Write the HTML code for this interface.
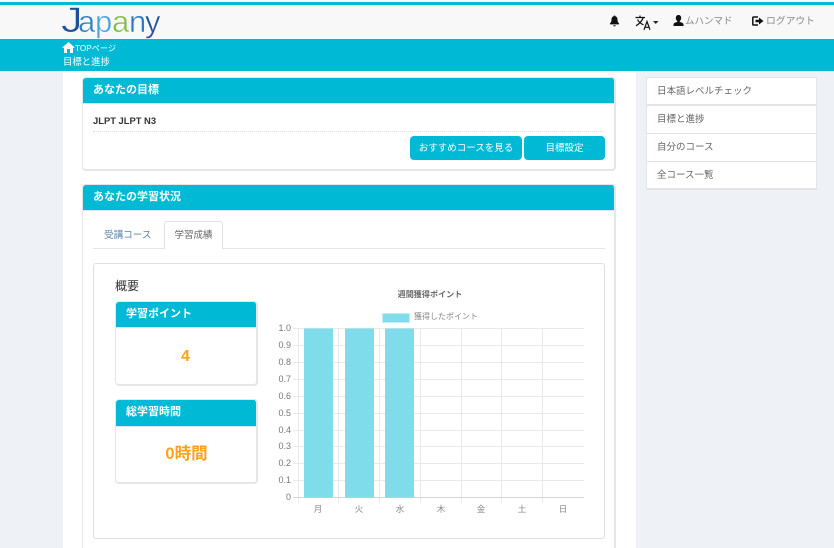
<!DOCTYPE html>
<html lang="ja"><head><meta charset="utf-8"><title>目標と進捗</title>
<style>
*{box-sizing:border-box}
html,body{margin:0;padding:0;width:834px;height:548px;overflow:hidden}
#w{position:relative;width:834px;height:548px;overflow:hidden;background:#eef1f6;font-family:"Liberation Sans","Noto Sans CJK JP",sans-serif;font-size:10px;color:#555}
.a{position:absolute;white-space:nowrap}
.panel{position:absolute;background:#fff;border:1px solid #e6e6e6;border-width:1px 2px 2px 1px;border-radius:4px;overflow:hidden}
.head{position:absolute;left:0;right:0;top:0;background:#00bad5;color:#fff;font-weight:bold;font-size:11px;border-bottom:1px solid #d5e8ec}
.btn{position:absolute;background:#00bad5;color:#fff;border-radius:4px;text-align:center;font-size:9.500px;height:24px;line-height:26px}
.li{position:absolute;left:646px;width:171px;background:#fff;border:1px solid #e2e4e7;height:29px;line-height:27px;padding-left:10px;color:#666;font-size:9.500px}
.tick{font-size:9px;color:#777;text-align:right;width:24px;left:267px;line-height:10px}
.xl{font-size:8.500px;color:#888;width:20px;text-align:center;top:504px;line-height:11px}
</style></head>
<body><div id="w">
<div class="a" style="left:63px;top:71px;width:573px;height:477px;background:#fff"></div>
<div class="a" style="left:0;top:0;width:834px;height:39px;background:#f8f8f8"></div>
<div class="a" style="left:0;top:2px;width:834px;height:3px;background:#00bad5"></div>

<svg class="a" style="left:0;top:0" width="180" height="39" viewBox="0 0 180 39">
<g font-family="'Liberation Sans',sans-serif" stroke="#f8f8f8" stroke-width=".5">
<text transform="translate(61 32) scale(1.35 1.1)" font-size="32" fill="#1e4f9a">J</text>
<text y="32" font-size="31" fill="#2f7fc4"><tspan x="78">a</tspan><tspan x="95" fill="#45a6dc">p</tspan><tspan x="112" fill="#7fbe45">a</tspan><tspan x="129" fill="#2c78bd">n</tspan><tspan x="145" fill="#1e559f">y</tspan></text>
</g>
</svg>
<div class="a" style="left:0;top:39px;width:834px;height:32px;background:#00bad5"></div>

<svg class="a" style="left:62px;top:42px" width="13" height="11" viewBox="0 0 13 11"><path fill="#fff" d="M6.500 0 L13 5.800 L11 5.800 L11 11 L8 11 L8 7 L5 7 L5 11 L2 11 L2 5.800 L0 5.800 Z"/></svg>
<div class="a" style="left:75px;top:42px;color:#fff;font-size:8.200px;line-height:13px">TOPページ</div>
<div class="a" style="left:63px;top:55px;color:#fff;font-size:9.400px;line-height:13px">目標と進捗</div>

<svg class="a" style="left:609px;top:15px" width="11" height="12" viewBox="0 0 11 12"><path fill="#111" d="M5.500 0.500c.6 0 1 .4 1 .9 1.500.4 2 1.600 2 3.100 0 2 .6 3 1.600 4v.9H.9v-.9c1-1 1.600-2 1.600-4 0-1.500.5-2.700 2-3.100 0-.5.4-.9 1-.9zM4.300 10.200h2.400c0 .7-.5 1.200-1.200 1.200s-1.200-.5-1.200-1.200z"/></svg>
<svg class="a" style="left:635px;top:15px" width="24" height="15" viewBox="0 0 24 15"><path fill="none" stroke="#111" stroke-width="1.200" d="M0.500 2.500H10M5 0.500V2.500M8.300 2.500C7 6 4 9 1 10.800M2.500 4.500C4 7.500 6 8.800 8.500 9.800"/><path fill="none" stroke="#111" stroke-width="1.200" d="M9 14.800L12 6.500L15 14.800M10.100 12.300H13.900"/><path fill="#222" d="M18 6h5.500l-2.750 3z"/></svg>
<svg class="a" style="left:673px;top:15px" width="11" height="11" viewBox="0 0 11 11"><path fill="#111" d="M5.500 0C7.300 0 8.200 1.300 8.200 3c0 1.400-.7 2.700-1.500 3.200v.7c1.800.5 3.800 1.200 3.800 2.400V11H.5V9.300c0-1.200 2-1.900 3.800-2.400v-.7C3.500 5.700 2.800 4.400 2.800 3 2.800 1.300 3.700 0 5.500 0z"/></svg>
<div class="a" style="left:685px;top:15px;font-size:9.500px;line-height:14px;color:#888">ムハンマド</div>
<svg class="a" style="left:752px;top:16px" width="12" height="10" viewBox="0 0 12 10"><path fill="none" stroke="#111" stroke-width="1.500" d="M6 1H1.500Q.8 1 .8 1.800V8.200Q.8 9 1.500 9H6"/><path fill="#111" d="M3.500 3.700H7V1.500L11.500 5 7 8.500V6.300H3.500z"/></svg>
<div class="a" style="left:766px;top:15px;font-size:9.800px;line-height:14px;color:#888">ログアウト</div>

<div class="panel" style="left:82px;top:77px;width:534px;height:94px">
  <div class="head" style="height:26px;line-height:24px;padding-left:10px">あなたの目標</div>
  <div class="a" style="left:10px;top:36px;font-size:9.400px;font-weight:bold;color:#333;line-height:13px">JLPT JLPT N3</div>
  <div class="a" style="left:10px;top:53px;width:510px;border-top:1px dotted #ddd"></div>
  <div class="btn" style="left:327px;top:58px;width:112px">おすすめコースを見る</div>
  <div class="btn" style="left:441px;top:58px;width:81px">目標設定</div>
</div>

<div class="panel" style="left:82px;top:184px;width:534px;height:380px;">
  <div class="head" style="height:26px;line-height:24px;padding-left:10px">あなたの学習状況</div>
</div>
<div class="a" style="left:93px;top:248px;width:512px;height:1px;background:#e5e5e5"></div>
<div class="a" style="left:104px;top:229px;font-size:9.600px;line-height:14px;color:#5b84ad">受講コース</div>
<div class="a" style="left:164px;top:221px;width:59px;height:28px;background:#fff;border:1px solid #e2e2e2;border-bottom:0;border-radius:3px 3px 0 0;text-align:center;line-height:27px;font-size:9.500px;color:#666">学習成績</div>

<div class="a" style="left:93px;top:263px;width:512px;height:276px;border:1px solid #e0e0e0;border-radius:3px;background:#fff"></div>
<div class="a" style="left:115px;top:278px;font-size:12px;line-height:16px;color:#333">概要</div>

<div class="panel" style="left:115px;top:301px;width:143px;height:85px">
  <div class="head" style="height:26px;line-height:24px;padding-left:10px">学習ポイント</div>
  <div class="a" style="left:-1px;width:141px;top:45px;text-align:center;color:#ffa21a;font-weight:bold;font-size:16px;line-height:20px">4</div>
</div>
<div class="panel" style="left:115px;top:399px;width:143px;height:85px">
  <div class="head" style="height:27px;line-height:25px;padding-left:10px">総学習時間</div>
  <div class="a" style="left:0;width:141px;top:43px;text-align:center;color:#ffa21a;font-weight:bold;font-size:16.500px;line-height:22px">0時間</div>
</div>

<div class="a" style="left:330px;width:200px;top:289px;text-align:center;font-size:8.100px;font-weight:bold;color:#666;line-height:12px">週間獲得ポイント</div>
<div class="a" style="left:382px;top:313px;width:28px;height:10px;background:#7fdcea;border:1px solid #bfeef5"></div>
<div class="a" style="left:414px;top:311px;font-size:8px;color:#888;line-height:12px">獲得したポイント</div>

<svg class="a" style="left:280px;top:320px" width="310" height="190" viewBox="280 320 310 190" shape-rendering="crispEdges">
<g stroke="#e9e9e9" stroke-width="1">
<path d="M293 328.500H584M293 345.500H584M293 362.500H584M293 379.500H584M293 396.500H584M293 413.500H584M293 430.500H584M293 446.500H584M293 463.500H584M293 480.500H584"/>
<path d="M298.500 328V503M338.500 328V503M379.500 328V503M420.500 328V503M461.500 328V503M501.500 328V503M542.500 328V503"/>
</g>
<path stroke="#d5d5d5" d="M293 497.500H584"/>
<g fill="#7fdcea"><rect x="304" y="328.500" width="29" height="169"/><rect x="345" y="328.500" width="29" height="169"/><rect x="385" y="328.500" width="29" height="169"/></g>
</svg>

<div class="a tick" style="top:323px">1.0</div>
<div class="a tick" style="top:340px">0.9</div>
<div class="a tick" style="top:357px">0.8</div>
<div class="a tick" style="top:374px">0.7</div>
<div class="a tick" style="top:391px">0.6</div>
<div class="a tick" style="top:408px">0.5</div>
<div class="a tick" style="top:425px">0.4</div>
<div class="a tick" style="top:441px">0.3</div>
<div class="a tick" style="top:458px">0.2</div>
<div class="a tick" style="top:475px">0.1</div>
<div class="a tick" style="top:492px">0</div>

<div class="a xl" style="left:308px">月</div>
<div class="a xl" style="left:349px">火</div>
<div class="a xl" style="left:390px">水</div>
<div class="a xl" style="left:431px">木</div>
<div class="a xl" style="left:471px">金</div>
<div class="a xl" style="left:512px">土</div>
<div class="a xl" style="left:553px">日</div>

<div class="li" style="top:77px;border-bottom-width:2px">日本語レベルチェック</div>
<div class="li" style="top:105px">目標と進捗</div>
<div class="li" style="top:133px">自分のコース</div>
<div class="li" style="top:161px;border-bottom-width:2px">全コース一覧</div>
</div></body></html>
